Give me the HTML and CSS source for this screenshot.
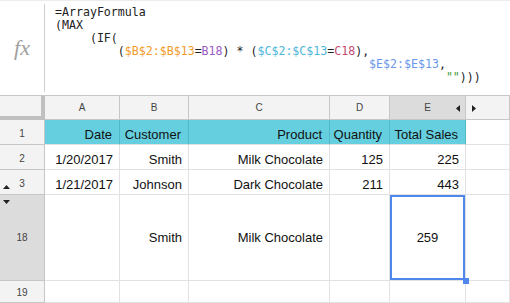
FILE: index.html
```html
<!DOCTYPE html>
<html lang="en">
<head>
    <meta charset="UTF-8">
    <title>Sheet</title>
    <link rel="stylesheet" href="styles.css">
</head>
<body>
    <div class="formula-bar">
        <div class="fx-box"><span class="fx">fx</span></div>
        <pre class="formula">=ArrayFormula
(MAX
     (IF(
         (<span class="t-orange">$B$2:$B$13</span>=<span class="t-purple">B18</span>) * (<span class="t-cyan">$C$2:$C$13</span>=<span class="t-pink">C18</span>),
                                             <span class="t-blue">$E$2:$E$13</span>,
                                                        <span class="t-green">""</span>)))</pre>
    </div>

    <div class="grid">
        <div class="corner"></div>
        <div class="col-head">A</div>
        <div class="col-head">B</div>
        <div class="col-head">C</div>
        <div class="col-head">D</div>
        <div class="col-head sel">E
            <svg class="hide-left" width="4" height="7" viewBox="0 0 4 7"><path d="M4 0 L0 3.5 L4 7 Z" fill="#222"/></svg>
        </div>
        <div class="col-head">
            <svg class="hide-right" width="4" height="7" viewBox="0 0 4 7"><path d="M0 0 L4 3.5 L0 7 Z" fill="#222"/></svg>
        </div>

        <div class="row-head">1</div>
        <div class="cell head-cell">Date</div>
        <div class="cell head-cell">Customer</div>
        <div class="cell head-cell">Product</div>
        <div class="cell head-cell">Quantity</div>
        <div class="cell head-cell">Total Sales</div>
        <div class="cell"></div>

        <div class="row-head">2</div>
        <div class="cell">1/20/2017</div>
        <div class="cell">Smith</div>
        <div class="cell">Milk Chocolate</div>
        <div class="cell">125</div>
        <div class="cell">225</div>
        <div class="cell"></div>

        <div class="row-head">3
            <svg class="arrow-up" width="7" height="4" viewBox="0 0 7 4"><path d="M0 4 L3.5 0 L7 4 Z" fill="#222"/></svg>
        </div>
        <div class="cell">1/21/2017</div>
        <div class="cell">Johnson</div>
        <div class="cell">Dark Chocolate</div>
        <div class="cell">211</div>
        <div class="cell">443</div>
        <div class="cell"></div>

        <div class="row-head sel">18
            <svg class="arrow-down" width="7" height="4" viewBox="0 0 7 4"><path d="M0 0 L7 0 L3.5 4 Z" fill="#222"/></svg>
        </div>
        <div class="cell tall"></div>
        <div class="cell tall">Smith</div>
        <div class="cell tall">Milk Chocolate</div>
        <div class="cell tall"></div>
        <div class="cell tall center selected">259</div>
        <div class="cell tall"></div>

        <div class="row-head">19</div>
        <div class="cell"></div>
        <div class="cell"></div>
        <div class="cell"></div>
        <div class="cell"></div>
        <div class="cell"></div>
        <div class="cell"></div>
    </div>
</body>
</html>
```

FILE: styles.css
```css
body {
    margin: 0;
    width: 510px;
    height: 303px;
    overflow: hidden;
    background-color: #fff;
    font-family: "Liberation Sans", Arial, sans-serif;
}
.formula-bar {
    display: flex;
    height: 96px;
    box-sizing: border-box;
    border-top: 1px solid #ececec;
    border-bottom: 1px solid #c6c6c6;
}
.fx-box {
    width: 45px;
    flex-shrink: 0;
    display: flex;
    align-items: center;
    justify-content: center;
    margin: 3px 0;
    border-right: 1px solid #cfcfcf;
    box-sizing: border-box;
}
.fx {
    font-family: "Liberation Serif", "Times New Roman", serif;
    font-style: italic;
    font-size: 22px;
    color: #a0a0a0;
    margin-top: 0;
}
.formula {
    margin: 0;
    padding: 5px 0 0 10px;
    font-family: "DejaVu Sans Mono", monospace;
    font-size: 11.6px;
    line-height: 13px;
    color: #222;
}
.t-orange { color: #f39b2c; }
.t-purple { color: #9b5bc4; }
.t-cyan { color: #4db6d8; }
.t-pink { color: #c2496f; }
.t-blue { color: #6b98eb; }
.t-green { color: #3f9b3c; }

.grid {
    display: grid;
    grid-template-columns: 45px 75px 69px 141px 60px 76px 44px;
    grid-template-rows: 24px 25px 25px 25px 86px 22px;
}
.corner {
    background-color: #f3f3f3;
    border-right: 4px solid #c0c0c0;
    border-bottom: 4px solid #c0c0c0;
}
.col-head,
.row-head {
    position: relative;
    display: flex;
    align-items: center;
    justify-content: center;
    background-color: #f3f3f3;
    border-right: 1px solid #c7c7c7;
    border-bottom: 1px solid #c7c7c7;
    font-size: 10px;
    color: #444;
}
.row-head {
    padding-top: 2px;
}
.col-head.sel,
.row-head.sel {
    background-color: #dcdcdc;
}
.row-head.sel {
    padding-top: 0;
}
.hide-left {
    position: absolute;
    right: 5px;
    top: 9px;
}
.hide-right {
    position: absolute;
    left: 6px;
    top: 9px;
}
.arrow-up {
    position: absolute;
    left: 3px;
    bottom: 5px;
}
.arrow-down {
    position: absolute;
    left: 3px;
    top: 5px;
}
.cell {
    position: relative;
    display: flex;
    align-items: center;
    justify-content: flex-end;
    padding: 5px 6px 0 0;
    border-right: 1px solid #e2e2e2;
    border-bottom: 1px solid #e2e2e2;
    font-size: 13px;
    color: #111;
    white-space: nowrap;
}
.head-cell {
    background-color: #65cfdf;
    border-right-color: #52b7c7;
    padding-right: 7px;
}
.cell.tall {
    padding-top: 0;
}
.cell.center {
    justify-content: center;
    padding-right: 0;
}
.selected {
    box-shadow: inset 0 0 0 2px #4f87ed;
}
.selected::after {
    content: "";
    position: absolute;
    right: -4px;
    bottom: -4px;
    width: 6px;
    height: 6px;
    background-color: #4f87ed;
    z-index: 2;
}
```
